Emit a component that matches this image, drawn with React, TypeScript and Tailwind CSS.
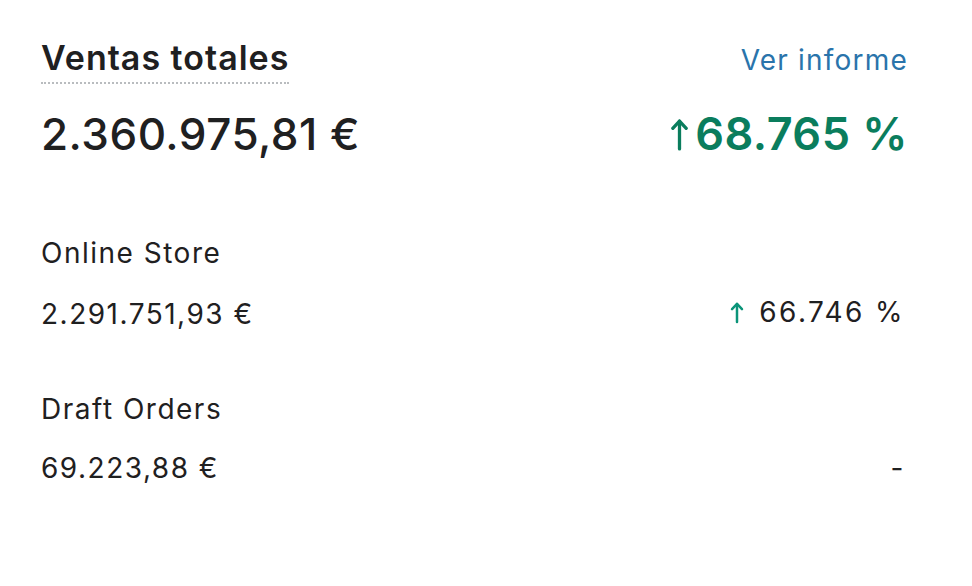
import type { ReactNode } from "react";

function UpArrow({ className }: { className?: string }) {
  return (
    <svg
      viewBox="0 0 16 32"
      fill="none"
      stroke="currentColor"
      strokeWidth={3.2}
      strokeLinecap="round"
      strokeLinejoin="round"
      className={className}
    >
      <path d="M8 30V3" />
      <path d="M1.5 10L8 3l6.5 7" />
    </svg>
  );
}

function SmallUpArrow({ className }: { className?: string }) {
  return (
    <svg
      viewBox="0 0 14 24"
      fill="none"
      stroke="currentColor"
      strokeWidth={2.6}
      strokeLinecap="round"
      strokeLinejoin="round"
      className={className}
    >
      <path d="M7 22V3" />
      <path d="M1.8 8.5L7 3l5.2 5.5" />
    </svg>
  );
}

function Channel({
  name,
  amount,
  change,
}: {
  name: string;
  amount: string;
  change: ReactNode;
}) {
  return (
    <div className="flex flex-col gap-[27px]">
      <div className="text-[28px] leading-[32px] tracking-[1.5px]">{name}</div>
      <div className="flex items-baseline justify-between text-[28px] leading-[32px] tracking-[1.5px]">
        <span>{amount}</span>
        {change}
      </div>
    </div>
  );
}

export default function App() {
  return (
    <div
      className="h-[586px] w-[972px] bg-white pl-[41px] pr-[64px] pt-[38px] text-[#1f2021]"
      style={{ fontFamily: "Inter, 'Noto Sans', sans-serif" }}
    >
      <div className="flex items-baseline justify-between">
        <h2 className="border-b-2 border-dotted border-[#b9bcbf] pb-[4px] text-[34px] font-semibold leading-[40px] tracking-[1px]">
          Ventas totales
        </h2>
        <a className="text-[28px] leading-[32px] tracking-[1.2px] text-[#2a74ab]">Ver informe</a>
      </div>

      <div className="mt-[24px] flex items-baseline justify-between">
        <span className="text-[44px] font-medium leading-[52px] tracking-[0.5px]">2.360.975,81 €</span>
        <span className="flex items-baseline gap-[7px] text-[45px] font-semibold leading-[52px] tracking-[0.5px] text-[#0a7d5d]">
          <UpArrow className="h-[33px] w-[17px] self-center" />
          68.765 %
        </span>
      </div>

      <div className="mt-[77px] flex flex-col gap-[63px] pr-[3px]">
        <Channel
          name="Online Store"
          amount="2.291.751,93 €"
          change={
            <span className="flex items-center gap-[15px] tracking-[2.4px]">
              <SmallUpArrow className="h-[23px] w-[14px] text-[#0b9479]" />
              66.746 %
            </span>
          }
        />
        <Channel name="Draft Orders" amount="69.223,88 €" change={<span>-</span>} />
      </div>
    </div>
  );
}
